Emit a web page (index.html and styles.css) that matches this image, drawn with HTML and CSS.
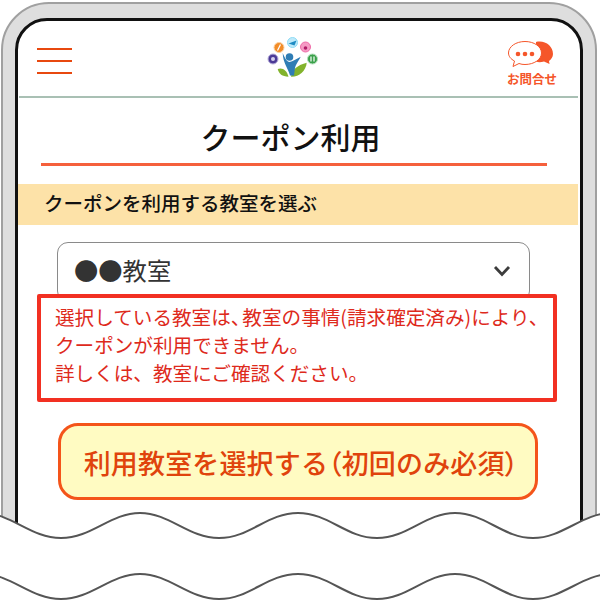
FILE: index.html
```html
<!DOCTYPE html>
<html lang="ja">
<head>
<meta charset="utf-8">
<title>クーポン利用</title>
<link rel="stylesheet" href="styles.css">
</head>
<body>
<div class="canvas">
  <div class="phone">
    <div class="screen">
      <header class="topbar">
        <div class="burger"><span></span><span></span><span></span></div>
        <svg class="logo" viewBox="0 0 60 50" width="60" height="50">
          <path d="M16.700 39C21 37 26 40 27.500 46.700C21 46.500 18 44 16.700 39Z" fill="#82b32c"/>
          <path d="M30 46.700C31 39 37 35 45.700 32.700C45 41 38 47 30 46.700Z" fill="#82b32c"/>
          <path d="M21.700 23C24 29 26 31.500 28.500 32C32 31.500 35 29 39.700 26.700C37 32 34.500 35 34 38L33 45.500L29 45.500C27 38 22 33 21.700 23Z" fill="#2f7db5"/>
          <circle cx="28.500" cy="27" r="3.800" fill="#2f7db5"/>
          <circle cx="12" cy="29" r="5" fill="#4b3a96" stroke="#b9b0dc" stroke-width="1"/>
          <circle cx="12" cy="29" r="2" fill="#d6d0ee"/>
          <circle cx="18" cy="17.500" r="5" fill="#f28c28" stroke="#fbd2a4" stroke-width="1"/>
          <path d="M16.500 20.500L19.500 14.500" stroke="#fff" stroke-width="1.200"/>
          <circle cx="31.500" cy="12.500" r="5" fill="#bfeafa" stroke="#8fdcf5" stroke-width="1"/>
          <path d="M27.500 13.500L35.500 10.500L33.500 15.500Z" fill="#1f8cc4"/>
          <circle cx="44.500" cy="17" r="5" fill="#f59ac4" stroke="#f06aa8" stroke-width="1"/>
          <circle cx="44.500" cy="18" r="1.800" fill="#b01c68"/>
          <circle cx="51.500" cy="29" r="5" fill="#3aa04a" stroke="#b4e0bc" stroke-width="1"/>
          <path d="M50 26.500V31.500M53 26.500V31.500" stroke="#fff" stroke-width="1.200"/>
        </svg>
        <div class="contact">
          <svg viewBox="0 0 50 28" width="50" height="28">
            <path d="M29 1C38 -1 46 5 46 13C46 16 44 18.500 42 20L42.500 23L37 20.500C34 21.500 31 21.500 29 20.500Z" fill="#f5562a"/>
            <path d="M18 0.500C27 0.500 34.500 5.500 34.500 12C34.500 18.500 27 23.500 18 23.500C16 23.500 14 23.300 12 22.500L6 25.500L7.500 20C3.500 18 1.500 15 1.500 12C1.500 5.500 9 0.500 18 0.500Z" fill="#fff" stroke="#f5562a" stroke-width="1"/>
            <circle cx="11" cy="13" r="2.300" fill="#f5562a"/>
            <circle cx="18" cy="13" r="2.300" fill="#f5562a"/>
            <circle cx="25" cy="13" r="2.300" fill="#f5562a"/>
          </svg>
          <span>お問合せ</span>
        </div>
      </header>
      <h1 class="title">クーポン利用</h1>
      <h2 class="band">クーポンを利用する教室を選ぶ</h2>
      <div class="select">
        <span class="select-text">●●教室</span>
        <svg class="chevron" viewBox="0 0 18 12" width="18" height="12"><path d="M2 2L9 9.500L16 2" fill="none" stroke="#3c3c3c" stroke-width="2.800"/></svg>
      </div>
      <div class="error">選択している教室は<span class="tight">、</span>教室の事情(請求確定済み)により、<br>クーポンが利用できません。<br>詳しくは、教室にご確認ください。</div>
      <div class="action"><button class="cta" type="button">利用教室を選択する<span class="wide-paren">（</span>初回のみ必須<span class="wide-paren">）</span></button></div>
    </div>
  </div>
  <svg class="tear" viewBox="0 0 600 604" width="600" height="604">
    <path d="M-18 513C12 513 30 538 61 538S110 513 140 513S188 538 219 538S267 513 298 513S346 538 377 538S425 513 455 513S503 538 533 538S582 513 612 513V604H-18Z" fill="#fff"/>
    <path d="M-18 513C12 513 30 538 61 538S110 513 140 513S188 538 219 538S267 513 298 513S346 538 377 538S425 513 455 513S503 538 533 538S582 513 612 513" fill="none" stroke="#555" stroke-width="2"/>
    <path d="M-18 574C12 574 30 599 61 599S110 574 140 574S188 599 219 599S267 574 298 574S346 599 377 599S425 574 455 574S503 599 533 599S582 574 612 574" fill="none" stroke="#555" stroke-width="2"/>
  </svg>
</div>
</body>
</html>
```
FILE: styles.css
```css
* { box-sizing: border-box; }
html, body { margin: 0; padding: 0; background: #fff; }
body { font-family: "Noto Sans CJK JP", "Noto Sans", sans-serif; }
.canvas { position: relative; width: 600px; height: 604px; overflow: hidden; }
.phone {
  margin: 2px 0 0 1px;
  width: 596px;
  height: 640px;
  padding: 14px 12px 0;
  background: #dedede;
  border: 2px solid #a0a0a0;
  border-radius: 48px;
}
.screen {
  height: 100%;
  background: #fff;
  border: 3px solid #111;
  border-radius: 32px;
  overflow: hidden;
}
.topbar {
  position: relative;
  height: 77px;
  margin: 0 2px 0 1px;
  padding: 0 21px 0 18px;
  display: flex;
  justify-content: space-between;
  align-items: flex-start;
  border-bottom: 2px solid;
  border-image: linear-gradient(#f0704a 50%, #a9c0b4 50%) 1;
}
.burger { display: flex; flex-direction: column; gap: 10px; width: 35px; padding-top: 27px; }
.burger span { display: block; height: 2px; background: #e8480f; }
.logo { position: absolute; left: 242px; top: 9px; }
.contact { display: flex; flex-direction: column; align-items: center; padding-top: 20px; width: 50px; }
.contact svg { display: block; margin-bottom: 2px; overflow: visible; }
.contact span { font-size: 12.500px; font-weight: 700; color: #f5562a; line-height: 16px; white-space: nowrap; }
.title {
  margin: 16px 33px 0 23px;
  height: 52px;
  padding-right: 7px;
  font-size: 30px;
  font-weight: 500;
  line-height: 44px;
  text-align: center;
  color: #111;
  border-bottom: 3px solid #f5603c;
}
.band {
  margin: 18px 2px 0 0;
  height: 41px;
  padding-left: 26px;
  background: #fde2a8;
  font-size: 19.500px;
  font-weight: 500;
  line-height: 38px;
  color: #111;
}
.select {
  margin: 17px 50px 0 39px;
  height: 60px;
  padding: 0 18px 0 16px;
  display: flex;
  justify-content: space-between;
  align-items: flex-start;
  border: 1px solid #8a8a8a;
  border-radius: 11px;
}
.select-text { font-size: 24.300px; line-height: 53px; color: #333; }
.chevron { margin-top: 22px; }
.error {
  position: relative;
  margin: -8px 23px 0 19px;
  height: 108px;
  padding: 5px 0 0 14px;
  background: #fff;
  border: 4px solid #f23022;
  border-radius: 2px;
  font-size: 19.600px;
  line-height: 28px;
  color: #de2a1c;
  white-space: nowrap;
}
.tight { letter-spacing: -8px; }
.action { margin: 21px 0 0 40px; }
.cta {
  display: block;
  width: 480px;
  height: 77px;
  padding: 1px 0 0 6px;
  background: #fffbc2;
  border: 3px solid #f4541a;
  border-radius: 20px;
  font-family: inherit;
  font-size: 27px;
  font-weight: 500;
  letter-spacing: 0.150px;
  color: #e0430c;
  white-space: nowrap;
}
.wide-paren { font-feature-settings: "palt"; }
.tear { position: absolute; left: 0; top: 0; display: block; }
```
